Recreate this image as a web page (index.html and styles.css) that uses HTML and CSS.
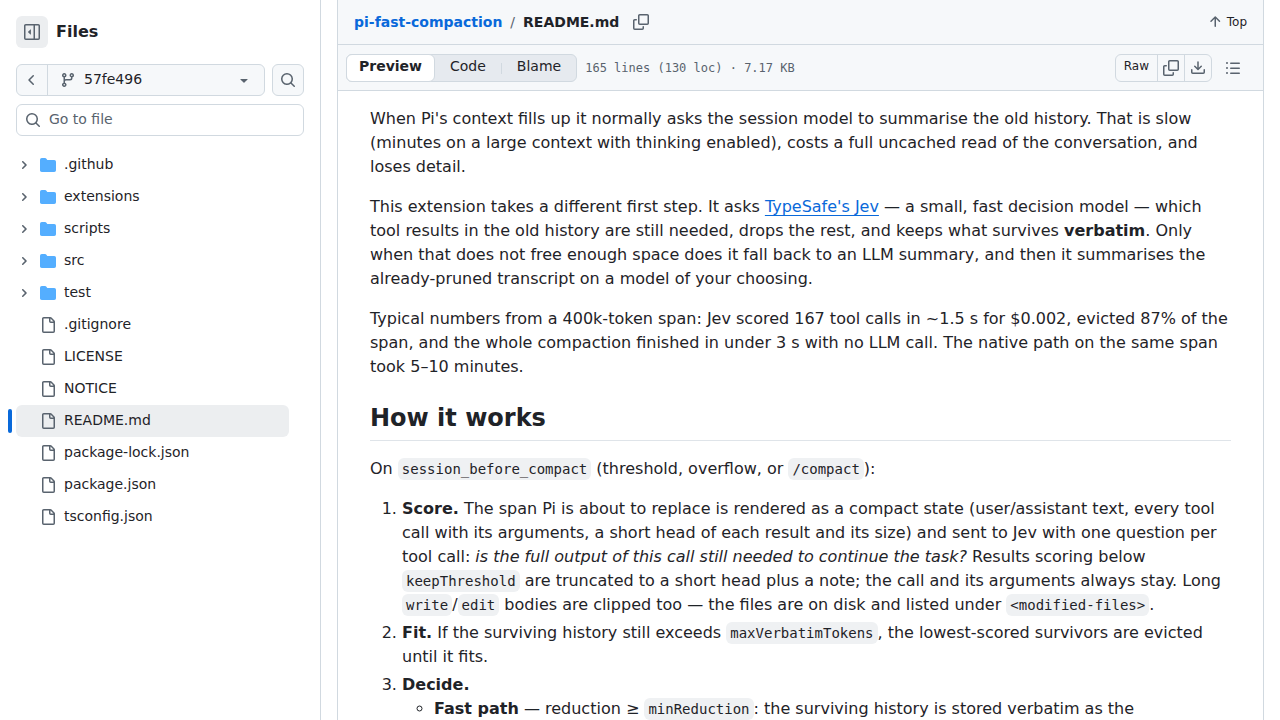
FILE: index.html
```
<!DOCTYPE html>
<html lang="en">

<head>
    <meta charset="UTF-8">
    <meta name="viewport" content="width=device-width, initial-scale=1.0">
    <title>pi-fast-compaction/README.md</title>
    <link rel="stylesheet" href="styles.css">
</head>

<body>
    <!-- shared icons -->
    <svg class="sprite" aria-hidden="true">
        <symbol id="copy" viewBox="0 0 16 16">
            <path d="M0 6.75C0 5.784.784 5 1.75 5h1.5a.75.75 0 0 1 0 1.5h-1.5a.25.25 0 0 0-.25.25v7.5c0 .138.112.25.25.25h7.5a.25.25 0 0 0 .25-.25v-1.5a.75.75 0 0 1 1.5 0v1.5A1.75 1.75 0 0 1 9.25 16h-7.5A1.75 1.75 0 0 1 0 14.25Z" />
            <path d="M5 1.75C5 .784 5.784 0 6.75 0h7.5C15.216 0 16 .784 16 1.75v7.5A1.75 1.75 0 0 1 14.25 11h-7.5A1.75 1.75 0 0 1 5 9.25Zm1.75-.25a.25.25 0 0 0-.25.25v7.5c0 .138.112.25.25.25h7.5a.25.25 0 0 0 .25-.25v-7.5a.25.25 0 0 0-.25-.25Z" />
        </symbol>
        <symbol id="search" viewBox="0 0 16 16">
            <path d="M10.68 11.74a6 6 0 0 1-7.922-8.982 6 6 0 0 1 8.982 7.922l3.04 3.04a.749.749 0 0 1-.326 1.275.749.749 0 0 1-.734-.215ZM11.5 7a4.499 4.499 0 1 0-8.997 0A4.499 4.499 0 0 0 11.5 7Z" />
        </symbol>
        <symbol id="chevron" viewBox="0 0 12 12">
            <path d="M4.7 10c-.2 0-.4-.1-.5-.2-.3-.3-.3-.8 0-1.1L6.9 6 4.2 3.3c-.3-.3-.3-.8 0-1.1.3-.3.8-.3 1.1 0l3.3 3.2c.3.3.3.8 0 1.1L5.3 9.7c-.2.2-.4.3-.6.3Z" />
        </symbol>
        <symbol id="folder" viewBox="0 0 16 16">
            <path d="M1.75 1A1.75 1.75 0 0 0 0 2.75v10.5C0 14.216.784 15 1.75 15h12.5A1.75 1.75 0 0 0 16 13.25v-8.5A1.75 1.75 0 0 0 14.25 3H7.5a.25.25 0 0 1-.2-.1l-.9-1.2C6.07 1.26 5.55 1 5 1H1.75Z" />
        </symbol>
        <symbol id="file" viewBox="0 0 16 16">
            <path d="M2 1.75C2 .784 2.784 0 3.75 0h6.586c.464 0 .909.184 1.237.513l2.914 2.914c.329.328.513.773.513 1.237v9.586A1.75 1.75 0 0 1 13.25 16h-9.5A1.75 1.75 0 0 1 2 14.25Zm1.75-.25a.25.25 0 0 0-.25.25v12.5c0 .138.112.25.25.25h9.5a.25.25 0 0 0 .25-.25V6h-2.75A1.75 1.75 0 0 1 9 4.25V1.5Zm6.75.062V4.25c0 .138.112.25.25.25h2.688l-.011-.013-2.914-2.914-.013-.011Z" />
        </symbol>
    </svg>

    <div class="app">
        <aside class="sidebar">
            <div class="sidebar-head">
                <button class="toggle" aria-label="Collapse file tree">
                    <svg class="icon" viewBox="0 0 16 16">
                        <path d="M6.823 7.823l-2.396 2.396A.25.25 0 0 1 4 10.043V5.25a.25.25 0 0 1 .427-.177l2.396 2.396a.25.25 0 0 1 0 .354Z" transform="matrix(-1 0 0 1 10.9 .35)" />
                        <path d="M1.75 0h12.5C15.216 0 16 .784 16 1.75v12.5A1.75 1.75 0 0 1 14.25 16H1.75A1.75 1.75 0 0 1 0 14.25V1.75C0 .784.784 0 1.75 0ZM1.5 1.75v12.5c0 .138.112.25.25.25H9.5v-13H1.75a.25.25 0 0 0-.25.25ZM11 14.5h3.25a.25.25 0 0 0 .25-.25V1.75a.25.25 0 0 0-.25-.25H11Z" />
                    </svg>
                </button>
                <h2 class="sidebar-title">Files</h2>
            </div>

            <div class="branch-row">
                <div class="branch-group">
                    <button class="back" aria-label="Back">
                        <svg class="icon" viewBox="0 0 16 16">
                            <path d="M9.78 12.78a.75.75 0 0 1-1.06 0L4.47 8.53a.75.75 0 0 1 0-1.06l4.25-4.25a.751.751 0 0 1 1.042.018.751.751 0 0 1 .018 1.042L6.06 8l3.72 3.72a.75.75 0 0 1 0 1.06Z" />
                        </svg>
                    </button>
                    <button class="branch">
                        <svg class="icon" viewBox="0 0 16 16">
                            <path d="M9.5 3.25a2.25 2.25 0 1 1 3 2.122V6A2.5 2.5 0 0 1 10 8.5H6a1 1 0 0 0-1 1v1.128a2.251 2.251 0 1 1-1.5 0V5.372a2.25 2.25 0 1 1 1.5 0v1.836A2.493 2.493 0 0 1 6 7h4a1 1 0 0 0 1-1v-.628A2.25 2.25 0 0 1 9.5 3.25Zm-6 0a.75.75 0 1 0 1.5 0 .75.75 0 0 0-1.5 0Zm8.25-.75a.75.75 0 1 0 0 1.5.75.75 0 0 0 0-1.5ZM4.25 12a.75.75 0 1 0 0 1.5.75.75 0 0 0 0-1.5Z" />
                        </svg>
                        <span class="branch-name">57fe496</span>
                        <svg class="icon" viewBox="0 0 16 16">
                            <path d="m4.427 7.427 3.396 3.396a.25.25 0 0 0 .354 0l3.396-3.396A.25.25 0 0 0 11.396 7H4.604a.25.25 0 0 0-.177.427Z" />
                        </svg>
                    </button>
                </div>
                <button class="square" aria-label="Search this repository">
                    <svg class="icon"><use href="#search" /></svg>
                </button>
            </div>

            <label class="filter">
                <svg class="icon"><use href="#search" /></svg>
                <input class="filter-input" type="text" placeholder="Go to file" aria-label="Go to file">
            </label>

            <nav class="tree" aria-label="Files">
                <a class="row" href="#"><svg class="chevron"><use href="#chevron" /></svg><svg class="icon folder"><use href="#folder" /></svg><span class="name">.github</span></a>
                <a class="row" href="#"><svg class="chevron"><use href="#chevron" /></svg><svg class="icon folder"><use href="#folder" /></svg><span class="name">extensions</span></a>
                <a class="row" href="#"><svg class="chevron"><use href="#chevron" /></svg><svg class="icon folder"><use href="#folder" /></svg><span class="name">scripts</span></a>
                <a class="row" href="#"><svg class="chevron"><use href="#chevron" /></svg><svg class="icon folder"><use href="#folder" /></svg><span class="name">src</span></a>
                <a class="row" href="#"><svg class="chevron"><use href="#chevron" /></svg><svg class="icon folder"><use href="#folder" /></svg><span class="name">test</span></a>
                <a class="row file" href="#"><svg class="icon"><use href="#file" /></svg><span class="name">.gitignore</span></a>
                <a class="row file" href="#"><svg class="icon"><use href="#file" /></svg><span class="name">LICENSE</span></a>
                <a class="row file" href="#"><svg class="icon"><use href="#file" /></svg><span class="name">NOTICE</span></a>
                <a class="row file current" href="#"><svg class="icon"><use href="#file" /></svg><span class="name">README.md</span></a>
                <a class="row file" href="#"><svg class="icon"><use href="#file" /></svg><span class="name">package-lock.json</span></a>
                <a class="row file" href="#"><svg class="icon"><use href="#file" /></svg><span class="name">package.json</span></a>
                <a class="row file" href="#"><svg class="icon"><use href="#file" /></svg><span class="name">tsconfig.json</span></a>
            </nav>
        </aside>

        <main class="viewer">
            <div class="path-bar">
                <a class="repo" href="#">pi-fast-compaction</a>
                <span class="slash">/</span>
                <span class="filename">README.md</span>
                <button class="plain copy-path" aria-label="Copy path">
                    <svg class="icon"><use href="#copy" /></svg>
                </button>
                <button class="plain top">
                    <svg class="icon" viewBox="0 0 16 16">
                        <path d="M3.47 7.78a.75.75 0 0 1 0-1.06l4.25-4.25a.75.75 0 0 1 1.06 0l4.25 4.25a.751.751 0 0 1-.018 1.042.751.751 0 0 1-1.042.018L9 4.81v7.44a.75.75 0 0 1-1.5 0V4.81L4.53 7.78a.75.75 0 0 1-1.06 0Z" />
                    </svg>
                    Top
                </button>
            </div>

            <div class="toolbar">
                <div class="tabs">
                    <button class="tab active">Preview</button>
                    <button class="tab">Code</button>
                    <button class="tab divided">Blame</button>
                </div>
                <span class="file-info">165 lines (130 loc) · 7.17 KB</span>
                <div class="actions">
                    <button class="action raw">Raw</button>
                    <button class="action" aria-label="Copy raw file">
                        <svg class="icon"><use href="#copy" /></svg>
                    </button>
                    <button class="action" aria-label="Download raw file">
                        <svg class="icon" viewBox="0 0 16 16">
                            <path d="M2.75 14A1.75 1.75 0 0 1 1 12.25v-2.5a.75.75 0 0 1 1.5 0v2.5c0 .138.112.25.25.25h10.5a.25.25 0 0 0 .25-.25v-2.5a.75.75 0 0 1 1.5 0v2.5A1.75 1.75 0 0 1 13.25 14Z" />
                            <path d="M7.25 7.689V2a.75.75 0 0 1 1.5 0v5.689l1.97-1.969a.749.749 0 1 1 1.06 1.06l-3.25 3.25a.749.749 0 0 1-1.06 0L4.22 6.78a.749.749 0 1 1 1.06-1.06l1.97 1.969Z" />
                        </svg>
                    </button>
                </div>
                <button class="plain" aria-label="Outline">
                    <svg class="icon" viewBox="0 0 16 16">
                        <path d="M5.75 2.5h8.5a.75.75 0 0 1 0 1.5h-8.5a.75.75 0 0 1 0-1.5Zm0 5h8.5a.75.75 0 0 1 0 1.5h-8.5a.75.75 0 0 1 0-1.5Zm0 5h8.5a.75.75 0 0 1 0 1.5h-8.5a.75.75 0 0 1 0-1.5ZM2 14a1 1 0 1 1 0-2 1 1 0 0 1 0 2Zm1-6a1 1 0 1 1-2 0 1 1 0 0 1 2 0ZM2 4a1 1 0 1 1 0-2 1 1 0 0 1 0 2Z" />
                    </svg>
                </button>
            </div>

            <article class="markdown">
                <p>When Pi's context fills up it normally asks the session model to summarise the old history. That is slow (minutes on a large context with thinking enabled), costs a full uncached read of the conversation, and loses detail.</p>
                <p>This extension takes a different first step. It asks <a href="#">TypeSafe's Jev</a> — a small, fast decision model — which tool results in the old history are still needed, drops the rest, and keeps what survives <strong>verbatim</strong>. Only when that does not free enough space does it fall back to an LLM summary, and then it summarises the already-pruned transcript on a model of your choosing.</p>
                <p>Typical numbers from a 400k-token span: Jev scored 167 tool calls in ~1.5 s for $0.002, evicted 87% of the span, and the whole compaction finished in under 3 s with no LLM call. The native path on the same span took 5–10 minutes.</p>
                <h2>How it works</h2>
                <p>On <code>session_before_compact</code> (threshold, overflow, or <code>/compact</code>):</p>
                <ol>
                    <li><strong>Score.</strong> The span Pi is about to replace is rendered as a compact state (user/assistant text, every tool call with its arguments, a short head of each result and its size) and sent to Jev with one question per tool call: <em>is the full output of this call still needed to continue the task?</em> Results scoring below <code>keepThreshold</code> are truncated to a short head plus a note; the call and its arguments always stay. Long <code>write</code>/<code>edit</code> bodies are clipped too — the files are on disk and listed under <code>&lt;modified-files&gt;</code>.</li>
                    <li><strong>Fit.</strong> If the surviving history still exceeds <code>maxVerbatimTokens</code>, the lowest-scored survivors are evicted until it fits.</li>
                    <li><strong>Decide.</strong>
                        <ul>
                            <li><strong>Fast path</strong> — reduction ≥ <code>minReduction</code>: the surviving history is stored verbatim as the</li>
                        </ul>
                    </li>
                </ol>
            </article>
        </main>
    </div>
</body>

</html>
```
FILE: styles.css
```
* {
    box-sizing: border-box;
}

body {
    margin: 0;
    font-family: "DejaVu Sans", sans-serif;
    font-size: 14px;
    line-height: 20px;
    color: #1f2328;
    background-color: #ffffff;
}

button,
input {
    font-family: inherit;
    font-size: inherit;
    line-height: inherit;
    color: inherit;
    margin: 0;
}

button {
    display: flex;
    align-items: center;
    justify-content: center;
    padding: 0;
    border: 0;
    background-color: transparent;
    cursor: pointer;
}

.sprite {
    display: none;
}

.icon {
    width: 16px;
    height: 16px;
    flex-shrink: 0;
    fill: #59636e;
}

.app {
    display: flex;
    height: 100vh;
    overflow: hidden;
}

/* file tree */
.sidebar {
    width: 321px;
    flex-shrink: 0;
    padding: 16px;
    border-right: 1px solid #d1d9e0;
}

.sidebar-head {
    display: flex;
    align-items: center;
    gap: 8px;
    margin-bottom: 16px;
}

.toggle {
    width: 32px;
    height: 32px;
    border-radius: 6px;
    background-color: #eceef0;
}

.sidebar-title {
    margin: 0;
    font-size: 16px;
}

.branch-row {
    display: flex;
    gap: 7px;
    margin-bottom: 8px;
}

.branch-group {
    display: flex;
    flex: 1;
    height: 32px;
    border: 1px solid #d1d9e0;
    border-radius: 6px;
    background-color: #f6f8fa;
}

.back {
    width: 31px;
    border-right: 1px solid #d1d9e0;
}

.branch {
    flex: 1;
    gap: 8px;
    padding: 0 12px;
}

.branch-name {
    flex: 1;
    padding-bottom: 2px;
    text-align: left;
}

.square {
    width: 32px;
    height: 32px;
    border: 1px solid #d1d9e0;
    border-radius: 6px;
    background-color: #f6f8fa;
}

.filter {
    display: flex;
    align-items: center;
    gap: 8px;
    height: 32px;
    padding: 0 8px;
    border: 1px solid #d1d9e0;
    border-radius: 6px;
}

.filter-input {
    flex: 1;
    min-width: 0;
    padding: 0 0 2px;
    border: 0;
    outline: none;
    background-color: transparent;
}

.filter-input::placeholder {
    color: #59636e;
    opacity: 1;
}

.tree {
    margin-top: 13px;
    margin-right: 15px;
}

.row {
    position: relative;
    display: flex;
    align-items: center;
    gap: 8px;
    height: 32px;
    padding-left: 2px;
    border-radius: 6px;
    color: #1f2328;
    text-decoration: none;
}

.row:hover,
.current {
    background-color: #eceef0;
}

.row.file {
    padding-left: 24px;
}

.name {
    padding-bottom: 2px;
}

.current::before {
    content: "";
    position: absolute;
    left: -8px;
    top: 4px;
    width: 4px;
    height: 24px;
    border-radius: 6px;
    background-color: #0969da;
}

.chevron {
    width: 12px;
    height: 12px;
    margin-right: 2px;
    flex-shrink: 0;
    fill: #59636e;
}

.folder {
    fill: #54aeff;
}

/* file viewer */
.viewer {
    flex: 1;
    min-width: 0;
    margin: 0 16px;
    border-left: 1px solid #d1d9e0;
    border-right: 1px solid #d1d9e0;
}

.path-bar,
.toolbar {
    display: flex;
    align-items: center;
    background-color: #f6f8fa;
    border-bottom: 1px solid #d1d9e0;
}

.path-bar {
    gap: 8px;
    height: 45px;
    padding: 0 16px 1px;
}

.repo {
    color: #0969da;
    font-weight: bold;
    text-decoration: none;
}

.repo:hover {
    text-decoration: underline;
}

.slash {
    color: #59636e;
}

.filename {
    font-weight: bold;
}

.copy-path {
    margin-left: 6px;
}

.top {
    gap: 4px;
    margin-left: auto;
    font-size: 12px;
}

.toolbar {
    gap: 8px;
    height: 46px;
    padding: 0 22px 0 8px;
}

.tabs {
    display: flex;
    height: 28px;
    border: 1px solid #d1d9e0;
    border-radius: 6px;
    background-color: #e6eaef;
}

.tab {
    position: relative;
    padding: 0 15px 3px 16px;
}

.tab.active {
    margin: -1px;
    padding: 0 12px 3px;
    border: 1px solid #d1d9e0;
    border-radius: 6px;
    background-color: #ffffff;
    font-weight: bold;
}

.tab.divided::before {
    content: "";
    position: absolute;
    left: 0;
    top: 8px;
    width: 1px;
    height: 11px;
    background-color: #d1d9e0;
}

.file-info {
    font-family: "DejaVu Sans Mono", monospace;
    font-size: 12px;
    color: #59636e;
}

.actions {
    display: flex;
    height: 28px;
    margin-left: auto;
    margin-right: 5px;
    border: 1px solid #d1d9e0;
    border-radius: 6px;
}

.action {
    width: 27px;
}

.action + .action {
    border-left: 1px solid #d1d9e0;
}

.action.raw {
    width: auto;
    padding: 0 8px 3px;
    font-size: 12px;
}

/* rendered readme */
.markdown {
    padding: 16px 32px;
    font-size: 16px;
    line-height: 24px;
}

.markdown p,
.markdown ol {
    margin: 0 0 16px;
}

.markdown a {
    color: #0969da;
    text-underline-offset: 3px;
}

.markdown h2 {
    margin: 24px 0 16px;
    padding-bottom: 7px;
    border-bottom: 1px solid #dfe4e9;
    font-size: 24px;
    line-height: 30px;
}

.markdown ol,
.markdown ul {
    padding-left: 32px;
}

.markdown ul {
    margin: 0;
}

.markdown li + li {
    margin-top: 4px;
}

.markdown code {
    padding: 3px 4px;
    border-radius: 6px;
    background-color: #eff1f3;
    font-family: "DejaVu Sans Mono", monospace;
    font-size: 14px;
}
```
